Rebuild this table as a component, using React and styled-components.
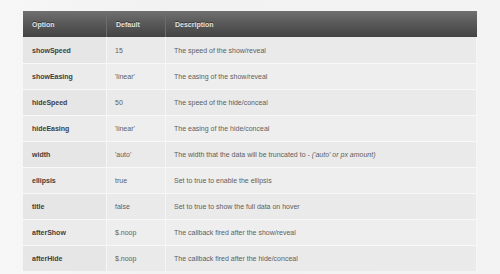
import React from "react";
import styled, { createGlobalStyle } from "styled-components";

const Global = createGlobalStyle`
  html, body { margin: 0; padding: 0; }
  body {
    background: #f3f3f3;
    font-family: "Liberation Sans", Arial, sans-serif;
    width: 500px;
    height: 274px;
    overflow: hidden;
  }
`;

const Page = styled.div`
  width: 500px;
  height: 274px;
  box-sizing: border-box;
  padding: 11px 0 0 23px;
  background: linear-gradient(90deg, #f7f7f7 0%, #f2f2f2 30%, #f3f3f3 100%);
`;

const Table = styled.table`
  width: 454px;
  border-collapse: separate;
  border-spacing: 0;
  table-layout: fixed;
  font-size: 7px;
`;

const Th = styled.th`
  box-sizing: border-box;
  height: 26px;
  padding: 0 0 0 9px;
  text-align: left;
  font-weight: bold;
  color: #e2e2e2;
  text-shadow: 0 -1px 0 #333;
  background: linear-gradient(180deg, #707070 0%, #5a5a5a 45%, #434343 100%);
  border-left: ${(p) => (p.$first ? "none" : "1px solid #6d6d6d")};
  width: ${(p) => p.$w}px;
`;

const Td = styled.td`
  box-sizing: border-box;
  height: 26px;
  padding: 0 0 0 ${(p) => (p.$first ? 9 : 8)}px;
  vertical-align: middle;
  white-space: nowrap;
  color: ${(p) => (p.$first ? "#3e3e3e" : "#5e5e5e")};
  font-weight: ${(p) => (p.$first ? "bold" : "normal")};
  background: ${(p) =>
    p.$odd
      ? p.$first
        ? "#e6e6e6"
        : "#eaeaea"
      : p.$first
      ? "#ebebeb"
      : "#eeeeee"};
  border-top: ${(p) => (p.$top ? "none" : "1px solid #f8f8f8")};
  border-left: ${(p) => (p.$first ? "none" : "1px solid #f6f6f6")};
  border-right: ${(p) => (p.$last ? "1px solid #f7f7f7" : "none")};
`;

const Em = styled.em`
  font-style: italic;
`;

const rows = [
  ["showSpeed", "15", "The speed of the show/reveal"],
  ["showEasing", "'linear'", "The easing of the show/reveal"],
  ["hideSpeed", "50", "The speed of the hide/conceal"],
  ["hideEasing", "'linear'", "The easing of the hide/conceal"],
  [
    "width",
    "'auto'",
    <>
      The width that the data will be truncated to - <Em>('auto' or px amount)</Em>
    </>,
  ],
  ["ellipsis", "true", "Set to true to enable the ellipsis"],
  ["title", "false", "Set to true to show the full data on hover"],
  ["afterShow", "$.noop", "The callback fired after the show/reveal"],
  ["afterHide", "$.noop", "The callback fired after the hide/conceal"],
];

export default function App() {
  return (
    <>
      <Global />
      <Page>
        <Table>
          <thead>
            <tr>
              <Th $first $w={83}>Option</Th>
              <Th $w={59}>Default</Th>
              <Th $w={312}>Description</Th>
            </tr>
          </thead>
          <tbody>
            {rows.map((r, i) => (
              <tr key={i}>
                <Td $first $odd={i % 2 === 0} $top={i === 0}>{r[0]}</Td>
                <Td $odd={i % 2 === 0} $top={i === 0}>{r[1]}</Td>
                <Td $odd={i % 2 === 0} $top={i === 0} $last>{r[2]}</Td>
              </tr>
            ))}
          </tbody>
        </Table>
      </Page>
    </>
  );
}
